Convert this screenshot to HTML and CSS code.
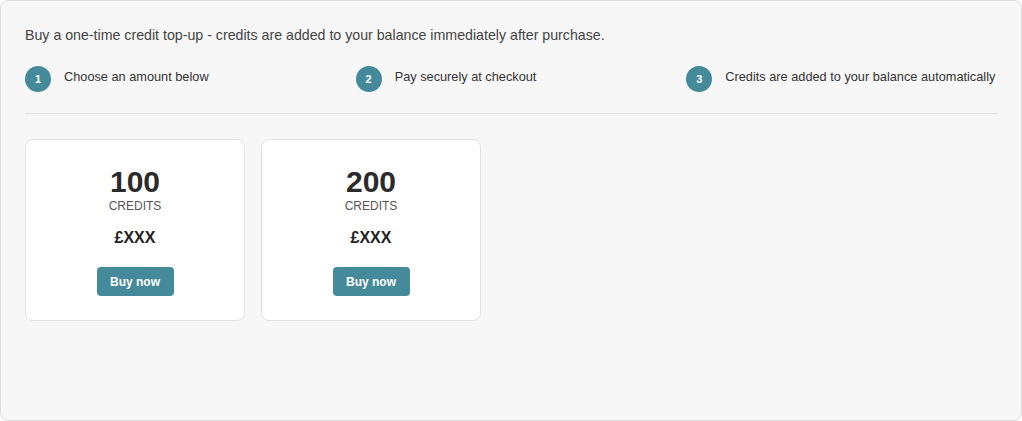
FILE: index.html
```html
<!DOCTYPE html>
<html>
<head>
  <link rel="stylesheet" href="styles.css">
</head>
<body>
  <div class="panel">
    <p class="intro">Buy a one-time credit top-up - credits are added to your balance immediately after purchase.</p>

    <ol class="steps">
      <li class="step">
        <span class="step__num">1</span>
        <span class="step__text">Choose an amount below</span>
      </li>
      <li class="step">
        <span class="step__num">2</span>
        <span class="step__text">Pay securely at checkout</span>
      </li>
      <li class="step">
        <span class="step__num">3</span>
        <span class="step__text">Credits are added to your balance automatically</span>
      </li>
    </ol>

    <div class="packs">
      <div class="pack">
        <strong class="pack__amount">100</strong>
        <span class="pack__unit">Credits</span>
        <strong class="pack__price">£XXX</strong>
        <button class="pack__buy" type="button">Buy now</button>
      </div>
      <div class="pack">
        <strong class="pack__amount">200</strong>
        <span class="pack__unit">Credits</span>
        <strong class="pack__price">£XXX</strong>
        <button class="pack__buy" type="button">Buy now</button>
      </div>
    </div>
  </div>
</body>
</html>
```

FILE: styles.css
```css
html,
body {
  margin: 0;
  height: 100%;
}

body {
  font-family: "Liberation Sans", Arial, sans-serif;
  color: #333;
}

.panel {
  box-sizing: border-box;
  height: 100%;
  padding: 24px 24px 0;
  border: 1px solid #dcdcdc;
  border-radius: 8px;
  background-color: #f7f7f7;
}

.intro {
  margin: 0;
  font-size: 14.2px;
  line-height: 20px;
  color: #444;
}

.steps {
  display: grid;
  grid-template-columns: repeat(3, 1fr);
  column-gap: 20px;
  margin: 21px 0 0;
  padding: 0 0 21px;
  border-bottom: 1px solid #e2e2e2;
  list-style: none;
}

.step {
  display: flex;
  align-items: flex-start;
  gap: 13px;
}

.step__num {
  display: flex;
  flex-shrink: 0;
  align-items: center;
  justify-content: center;
  width: 26px;
  height: 26px;
  border-radius: 50%;
  background-color: #458a9b;
  color: #fff;
  font-size: 11px;
  font-weight: bold;
}

.step__text {
  padding-top: 3px;
  font-size: 12.75px;
  line-height: 16px;
  white-space: nowrap;
}

.packs {
  display: flex;
  gap: 16px;
  margin-top: 25px;
}

.pack {
  display: flex;
  flex-direction: column;
  align-items: center;
  box-sizing: border-box;
  width: 220px;
  padding: 27px 0 24px;
  border: 1px solid #e3e3e3;
  border-radius: 8px;
  background-color: #fff;
}

.pack__amount {
  font-size: 30px;
  line-height: 30px;
  color: #2b2b2b;
}

.pack__unit {
  margin-top: 2px;
  font-size: 12px;
  line-height: 14px;
  text-transform: uppercase;
  color: #555;
}

.pack__price {
  margin-top: 15px;
  font-size: 16px;
  line-height: 20px;
  color: #222;
}

.pack__buy {
  width: 77px;
  height: 29px;
  margin-top: 19px;
  padding: 0;
  border: 0;
  border-radius: 4px;
  background-color: #458a9b;
  color: #fff;
  font-family: inherit;
  font-size: 12px;
  font-weight: bold;
}
```
